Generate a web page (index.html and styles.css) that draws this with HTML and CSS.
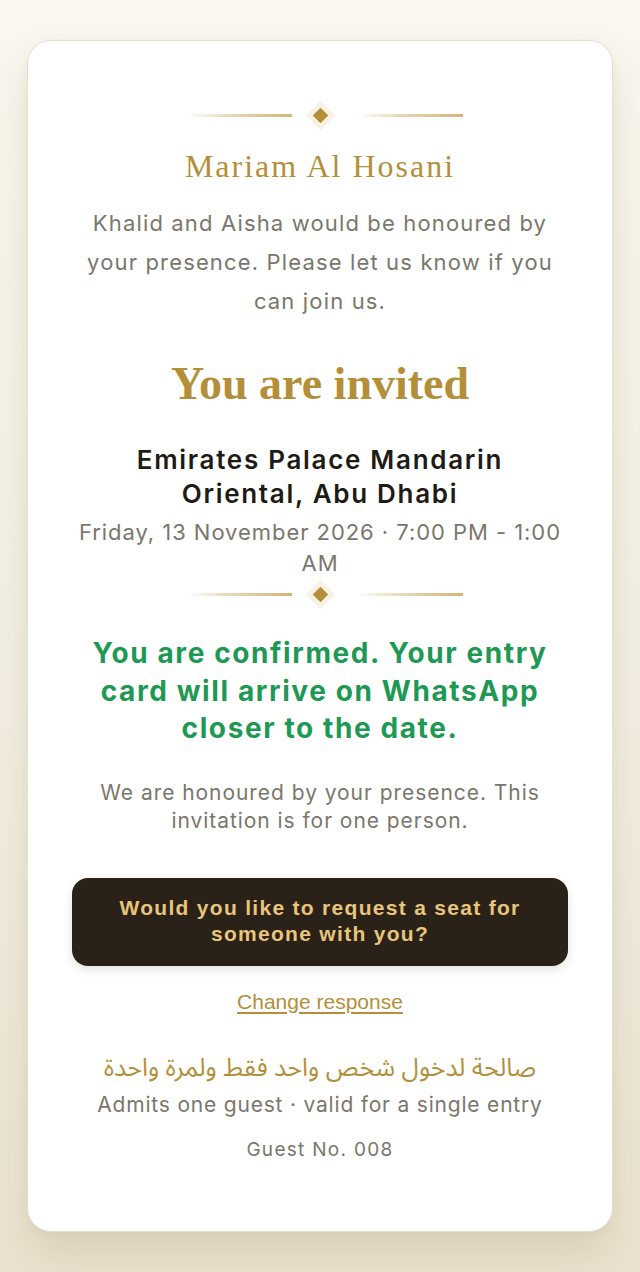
FILE: index.html
```html
<!DOCTYPE html>
<html lang="en">
<head>
<meta charset="utf-8">
<title>Invitation</title>
<link rel="stylesheet" href="styles.css">
</head>
<body>
<main class="page">
  <section class="card">
    <div class="ornament">
      <span class="line"></span>
      <span class="gem"><span class="gem-inner"></span></span>
      <span class="line"></span>
    </div>
    <h2 class="guest-name">Mariam Al Hosani</h2>
    <p class="intro">Khalid and Aisha would be honoured by your presence. Please let us know if you can join us.</p>
    <h1 class="invited">You are invited</h1>
    <p class="venue">Emirates Palace Mandarin Oriental, Abu Dhabi</p>
    <p class="date">Friday, 13 November 2026 · 7:00 PM - 1:00 AM</p>
    <div class="ornament">
      <span class="line"></span>
      <span class="gem"><span class="gem-inner"></span></span>
      <span class="line"></span>
    </div>
    <p class="confirmed">You are confirmed. Your entry card will arrive on WhatsApp closer to the date.</p>
    <p class="note">We are honoured by your presence. This invitation is for one person.</p>
    <button class="seat-btn" type="button">Would you like to request a seat for someone with you?</button>
    <a class="change" href="#">Change response</a>
    <p class="arabic" dir="rtl" lang="ar">صالحة لدخول شخص واحد فقط ولمرة واحدة</p>
    <p class="admits">Admits one guest · valid for a single entry</p>
    <p class="guest-no">Guest No. 008</p>
  </section>
</main>
</body>
</html>
```

FILE: styles.css
```css
* { box-sizing: border-box; }
html, body { margin: 0; padding: 0; }
body {
  min-height: 1272px;
  background: linear-gradient(180deg, #f9f7f0 0%, #f3efe3 55%, #ebe3d0 100%);
  font-family: Inter, "Liberation Sans", sans-serif;
}
.page {
  padding: 40px 27px 0;
}
.card {
  background: #ffffff;
  border: 1px solid #e4dfcf;
  border-radius: 24px;
  padding: 59px 44px 69px;
  display: flex;
  flex-direction: column;
  align-items: center;
  text-align: center;
  box-shadow: 0 22px 40px rgba(140, 120, 70, 0.18), 0 2px 6px rgba(140, 120, 70, 0.06);
}
.ornament {
  display: flex;
  align-items: center;
  height: 30px;
  margin-left: 8px;
}
.line {
  width: 106px;
  height: 3px;
  background: linear-gradient(90deg, rgba(214, 190, 140, 0) 0%, #e8dab8 40%, #d2b478 100%);
}
.gem {
  width: 30px;
  height: 30px;
  margin: 0 21px 0 14px;
  display: flex;
  align-items: center;
  justify-content: center;
  position: relative;
}
.gem::before {
  content: "";
  position: absolute;
  width: 21px;
  height: 21px;
  background: #f7f2e6;
  transform: rotate(45deg);
}
.gem-inner {
  width: 11px;
  height: 11px;
  background: #b48f37;
  transform: rotate(45deg);
  position: relative;
}
.guest-name {
  margin: 16px 0 0;
  font-family: "Liberation Serif", serif;
  font-weight: 400;
  font-size: 32px;
  line-height: 40px;
  letter-spacing: 2px;
  color: #b48f3a;
}
.intro {
  margin: 18px 0 0;
  font-size: 22px;
  line-height: 39px;
  letter-spacing: 1.15px;
  color: #7b766c;
}
.invited {
  margin: 35px 0 0;
  font-family: "Liberation Serif", serif;
  font-weight: 700;
  font-size: 46px;
  line-height: 56px;
  color: #b48f3a;
}
.venue {
  margin: 31px 0 0;
  max-width: 420px;
  font-size: 26px;
  line-height: 34px;
  font-weight: 600;
  letter-spacing: 1.7px;
  color: #1e1a15;
}
.date {
  margin: 6px 0 0;
  font-size: 22px;
  line-height: 31px;
  letter-spacing: 0.95px;
  color: #7b766c;
}
.confirmed {
  margin: 26px 0 0;
  font-size: 28px;
  line-height: 37.5px;
  font-weight: 700;
  letter-spacing: 1.6px;
  color: #1e9954;
}
.note {
  margin: 31px 0 0;
  font-size: 21px;
  line-height: 28px;
  letter-spacing: 0.95px;
  color: #7b766c;
}
.seat-btn {
  margin: 43px 0 0;
  width: 100%;
  border: none;
  border-radius: 16px;
  background: #2a2118;
  padding: 17px 24px 19px;
  font-family: "Liberation Sans", Arial, sans-serif;
  font-weight: 700;
  font-size: 21px;
  line-height: 26px;
  letter-spacing: 1.3px;
  color: #e8c57a;
  box-shadow: 0 4px 10px rgba(40, 30, 20, 0.12);
}
.change {
  margin: 24px 0 0;
  font-family: "Liberation Sans", Arial, sans-serif;
  font-size: 21px;
  line-height: 24px;
  color: #b48f3a;
  text-decoration: underline;
  text-underline-offset: 3px;
}
.arabic {
  margin: 37px 0 0;
  font-family: "Noto Sans Arabic", "DejaVu Sans", sans-serif;
  font-size: 25px;
  line-height: 34px;
  color: #b48f3a;
}
.admits {
  margin: 6px 0 0;
  font-size: 21px;
  line-height: 28px;
  letter-spacing: 0.8px;
  color: #7b766c;
}
.guest-no {
  margin: 19px 0 0;
  font-size: 19px;
  line-height: 24px;
  letter-spacing: 1.3px;
  color: #7b766c;
}
```
